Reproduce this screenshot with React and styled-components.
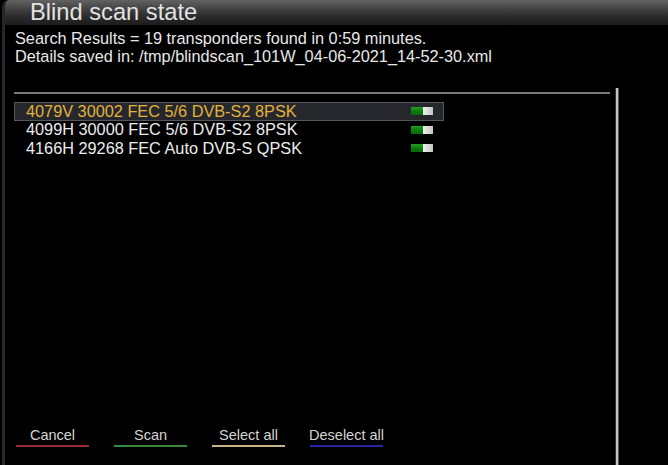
import React from 'react';
import styled, { createGlobalStyle } from 'styled-components';

const GlobalStyle = createGlobalStyle`
  html, body {
    margin: 0;
    padding: 0;
    background: #000;
  }
  body {
    font-family: "Liberation Sans", Arial, sans-serif;
  }
`;

const transponders = [
  { id: 1, label: '4079V 30002 FEC 5/6 DVB-S2 8PSK', on: true },
  { id: 2, label: '4099H 30000 FEC 5/6 DVB-S2 8PSK', on: true },
  { id: 3, label: '4166H 29268 FEC Auto DVB-S QPSK', on: true },
];

const buttons = [
  { key: 'red', text: 'Cancel', color: '#9c2c36' },
  { key: 'green', text: 'Scan', color: '#3a8a3c' },
  { key: 'yellow', text: 'Select all', color: '#c9b285' },
  { key: 'blue', text: 'Deselect all', color: '#2626a4' },
];

const Screen = styled.div`
  width: 668px;
  height: 465px;
  background: #000;
  overflow: hidden;
  display: flex;
`;

const Window = styled.div`
  flex: 1;
  margin-left: 2px;
  border-left: 3px solid #272727;
  border-top-left-radius: 7px;
  display: flex;
  flex-direction: column;
  overflow: hidden;
`;

const Header = styled.div`
  height: 25px;
  background: linear-gradient(#626262 0%, #434343 35%, #2a2a2a 68%, #1c1c1c 100%);
  padding-left: 25px;
  display: flex;
  align-items: center;
`;

const Title = styled.h1`
  margin: 0;
  font-size: 23.7px;
  font-weight: normal;
  line-height: 25px;
  color: #e2e2e2;
`;

const Info = styled.div`
  padding: 4px 0 0 10px;
  color: #e8e8e8;
  font-size: 16.3px;
  line-height: 18px;
`;

const Body = styled.div`
  flex: 1;
  margin-top: 23px;
  display: flex;
`;

const Content = styled.div`
  width: 596px;
  margin-left: 9px;
  display: flex;
  flex-direction: column;
`;

const Separator = styled.div`
  margin-top: 4px;
  height: 2px;
  background: #7a7a7a;
`;

const List = styled.div`
  margin-top: 8px;
  width: 430px;
  display: flex;
  flex-direction: column;
`;

const Row = styled.div`
  box-sizing: border-box;
  height: 18.5px;
  padding: 0 10px 0 11px;
  display: flex;
  align-items: center;
  justify-content: space-between;
  border: 1px solid ${p => (p.$selected ? '#55565c' : 'transparent')};
  background: ${p => (p.$selected ? '#26272d' : 'transparent')};
  color: ${p => (p.$selected ? '#e2b23a' : '#ececec')};
  font-size: 16.3px;
  line-height: 17px;
  white-space: nowrap;
`;

const Toggle = styled.span`
  display: flex;
  width: 22px;
  height: 8px;
`;

const ToggleOn = styled.span`
  width: 12px;
  background: linear-gradient(#22a022, #0b7a0b 55%, #0a6a0a);
`;

const ToggleKnob = styled.span`
  width: 10px;
  background: linear-gradient(90deg, #f0f0f0, #c4c4c4);
`;

const Footer = styled.div`
  margin-top: auto;
  padding: 0 0 18px 2px;
  display: flex;
  gap: 25px;
`;

const ColorButton = styled.div`
  width: 73px;
  display: flex;
  flex-direction: column;
  align-items: center;
  color: #d4d4d4;
  font-size: 14.5px;
  line-height: 16px;
  white-space: nowrap;

  &::after {
    content: '';
    align-self: stretch;
    height: 2px;
    margin-top: 2px;
    background: ${p => p.$color};
  }
`;

const Scrollbar = styled.div`
  margin-left: 6px;
  width: 2px;
  background: #c4c4c4;
  box-shadow: 1px 0 0 #555, -1px 0 0 #333;
`;

const App = () => {
  return (
    <>
      <GlobalStyle />
      <Screen>
        <Window>
          <Header>
            <Title>Blind scan state</Title>
          </Header>
          <Info>
            <div>Search Results = 19 transponders found in 0:59 minutes.</div>
            <div>Details saved in: /tmp/blindscan_101W_04-06-2021_14-52-30.xml</div>
          </Info>
          <Body>
            <Content>
              <Separator />
              <List>
                {transponders.map((t, idx) => (
                  <Row key={t.id} $selected={idx === 0}>
                    <span>{t.label}</span>
                    {t.on && (
                      <Toggle>
                        <ToggleOn />
                        <ToggleKnob />
                      </Toggle>
                    )}
                  </Row>
                ))}
              </List>
              <Footer>
                {buttons.map(b => (
                  <ColorButton key={b.key} $color={b.color}>{b.text}</ColorButton>
                ))}
              </Footer>
            </Content>
            <Scrollbar />
          </Body>
        </Window>
      </Screen>
    </>
  );
};

export default App;
